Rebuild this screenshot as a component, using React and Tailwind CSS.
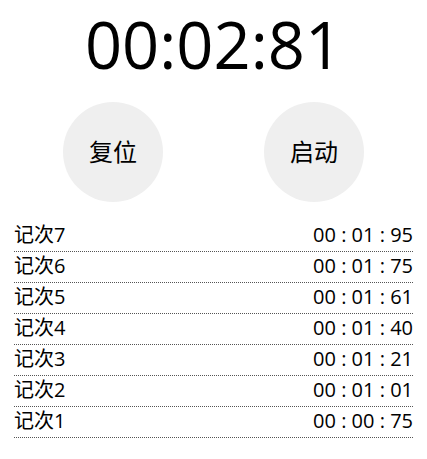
import React from "react";

const laps = [
  { name: "记次7", time: "00 : 01 : 95" },
  { name: "记次6", time: "00 : 01 : 75" },
  { name: "记次5", time: "00 : 01 : 61" },
  { name: "记次4", time: "00 : 01 : 40" },
  { name: "记次3", time: "00 : 01 : 21" },
  { name: "记次2", time: "00 : 01 : 01" },
  { name: "记次1", time: "00 : 00 : 75" },
];

const App = () => {
  return (
    <div
      className="w-[427px] h-[459px] bg-white text-black"
      style={{ fontFamily: '"Open Sans", "Noto Sans CJK SC", sans-serif' }}
    >
      {/* 计时显示 */}
      <div className="h-[88px] flex items-center justify-center text-[65px] leading-[88px]">
        00:02:81
      </div>

      {/* 按钮 */}
      <div className="flex justify-center gap-[101px] mt-[14px]">
        <button className="w-[100px] h-[100px] rounded-full bg-[#efefef] text-[24px] flex items-center justify-center">
          复位
        </button>
        <button className="w-[100px] h-[100px] rounded-full bg-[#efefef] text-[24px] flex items-center justify-center">
          启动
        </button>
      </div>

      {/* 记次列表 */}
      <ul className="mx-[14px] mt-[19px]">
        {laps.map((lap) => (
          <li
            key={lap.name}
            className="h-[31px] flex items-end justify-between pb-[6px] border-b border-dotted border-[#555] text-[20px] leading-none"
          >
            <span>{lap.name}</span>
            <span>{lap.time}</span>
          </li>
        ))}
      </ul>
    </div>
  );
};

export default App;
